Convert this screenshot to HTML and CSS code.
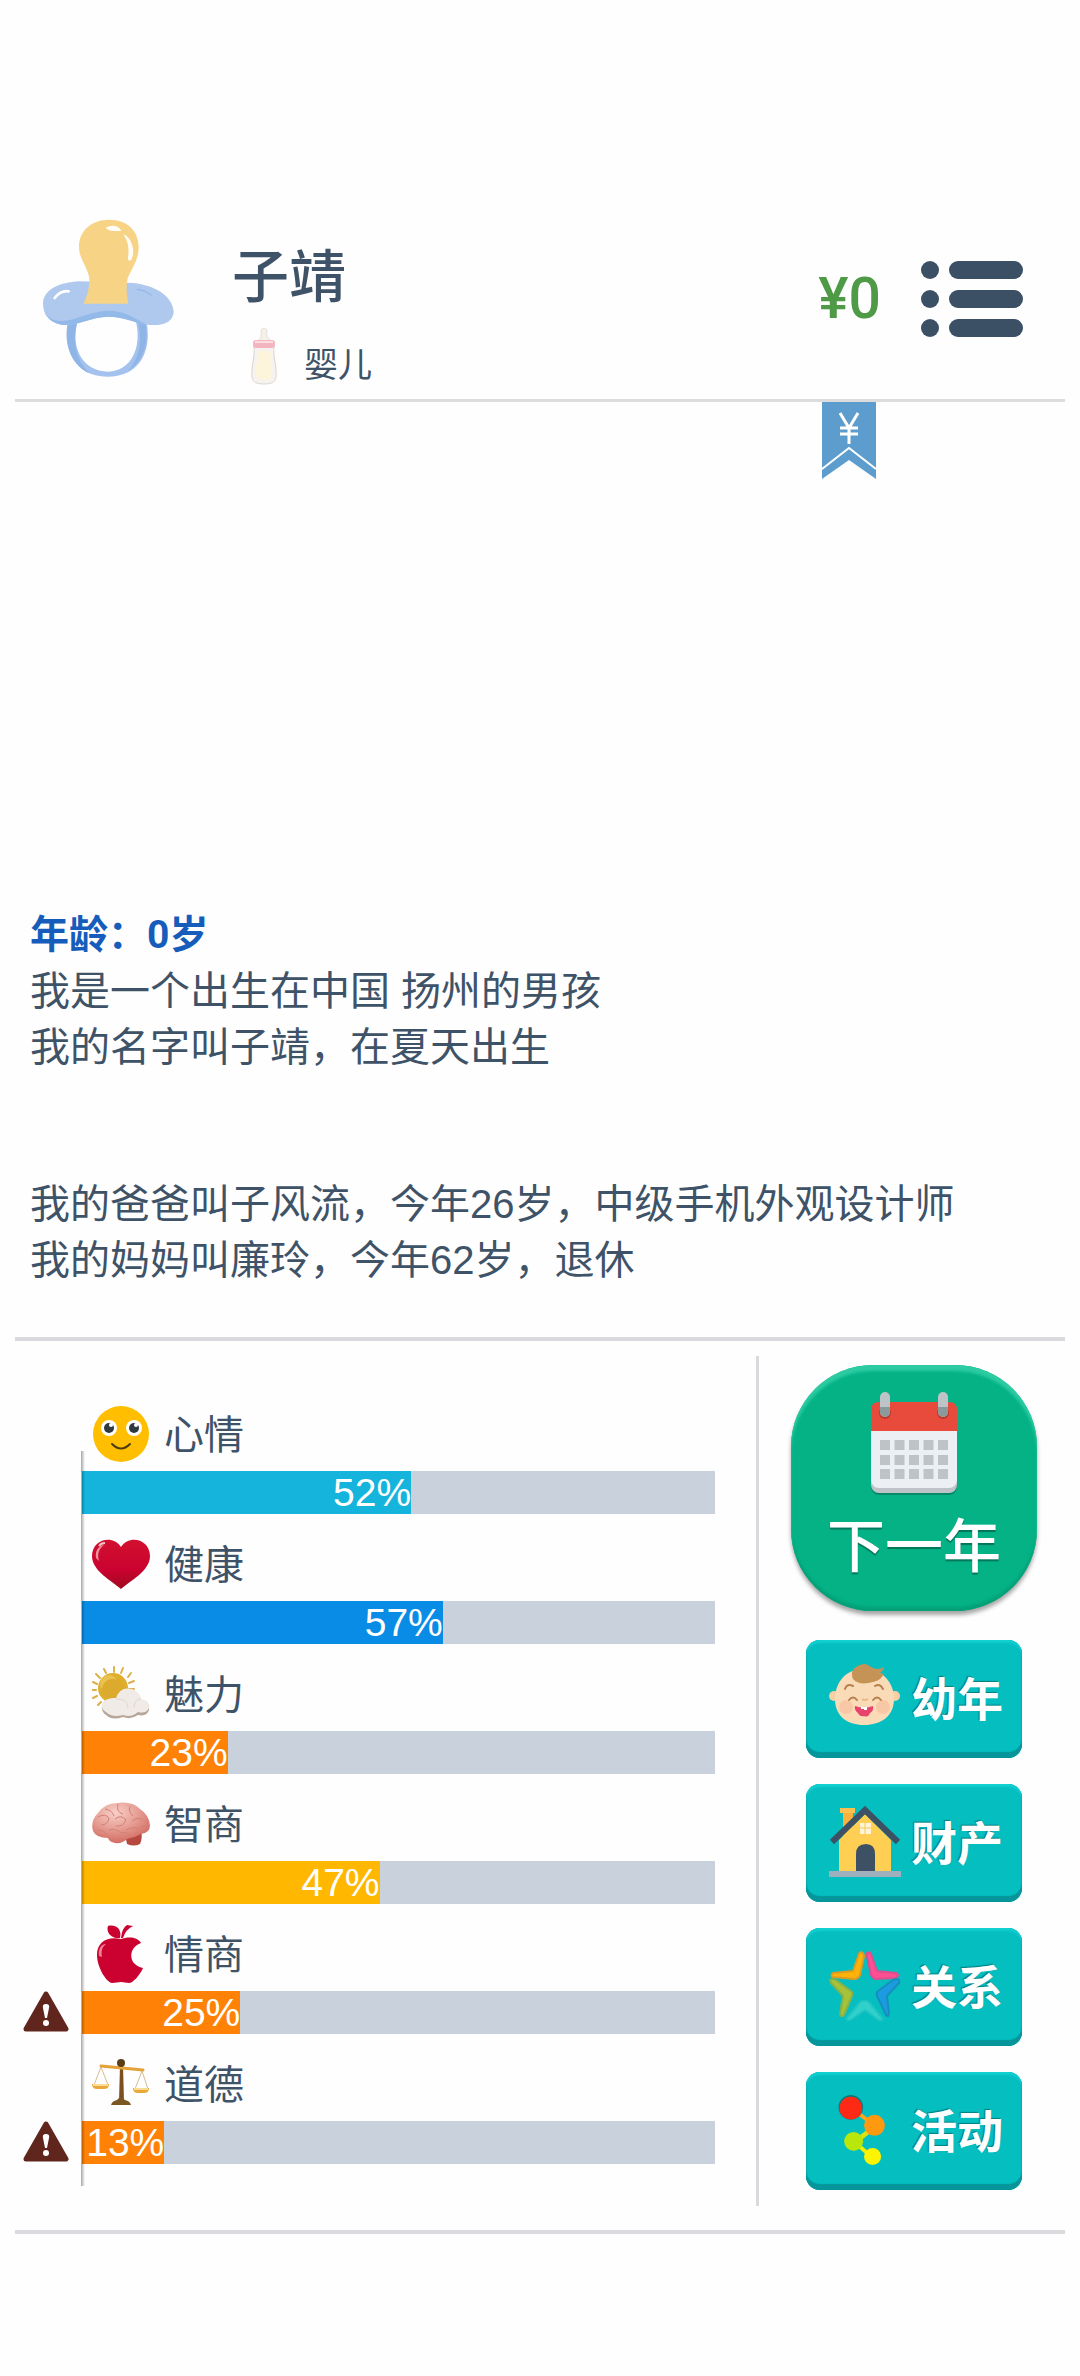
FILE: index.html
```
<!DOCTYPE html>
<html lang="zh-CN">
<head>
  <meta charset="UTF-8" />
  <meta name="viewport" content="width=device-width, initial-scale=1.0"/>
  <title>人生模拟</title>
  <link rel="stylesheet" href="styles.css">
</head>
<body>
  <header class="header">
    <svg class="avatar" viewBox="129 54 396 480" aria-hidden="true">
      <path d="M203 370 C188 440 220 530 322 530 C422 530 455 450 440 368 L408 366 C426 440 395 513 325 515 C245 514 212 440 232 366Z" fill="#a3c3ee"/>
      <path d="M204 372 C190 440 222 500 268 520 C228 480 216 430 231 370Z" fill="#8fb4e6"/>
      <path d="M437 370 C448 435 425 490 385 512 C415 480 428 430 415 370Z" fill="#8fb4e6"/>
      <path d="M129 310 C132 268 175 248 240 244 L400 249 C465 256 518 288 521 335 C520 365 490 380 440 374 C400 366 370 350 325 350 C270 352 235 376 190 375 C150 370 129 345 129 310Z" fill="#afc8ee"/>
      <path d="M131 325 C140 362 175 368 210 360 C260 345 290 332 330 332 C375 334 400 352 440 374 C400 368 370 350 325 350 C270 352 235 376 190 375 C155 371 135 350 131 325Z" fill="#93b9e9"/>
      <path d="M250 311 C264 285 272 250 266 225 C255 190 237 172 237 140 C237 92 275 59 328 59 C381 59 416 92 416 142 C416 180 395 205 383 235 C377 260 381 290 385 311Z" fill="#f7d386"/>
      <path d="M317 84 C332 74 355 74 364 93 C348 92 330 97 317 84Z M370 103 C394 112 408 150 394 180 C388 184 383 181 384 174 C388 145 385 125 370 103Z" fill="#fffdf6"/>
      <path d="M164 294 C175 280 192 272 206 274" fill="none" stroke="#fff" stroke-width="8" stroke-linecap="round"/>
      <path d="M412 268 Q435 270 453 285" fill="none" stroke="#93b9e9" stroke-width="4" stroke-linecap="round"/>
    </svg>
    <div class="identity">
      <h1 class="name">子靖</h1>
      <p class="stage">
        <svg class="bottle" viewBox="0 0 28 58" aria-hidden="true">
          <path d="M10 12 C12 9 11 5 11 3 Q14 -1 17 3 C17 6 16 9 18 11 L24 16 H4Z" fill="#f5f0e8" stroke="#e6dfd8" stroke-width="1"/>
          <path d="M4 19 H24 C23 31 26 36 26 44 C27 54 24 57 14 57 C4 57 1 54 2 44 C2 36 5 31 4 19Z" fill="#f6f2ef" stroke="#ddd5d2" stroke-width="1"/>
          <path d="M7 25 Q14 22 21 25 C20 34 22 38 22 44 C22 51 21 53 14 53 C7 53 6 50 6 44 C6 38 8 34 7 25Z" fill="#fdf4dc"/>
          <rect x="3" y="13" width="22" height="8" rx="3" fill="#f3b5bf"/>
          <path d="M5 15 H23" stroke="#fbdde1" stroke-width="2"/>
        </svg>
        <span>婴儿</span>
      </p>
    </div>
    <div class="account">
      <span class="money">¥0</span>
      <button class="menu" type="button" aria-label="菜单">
        <svg viewBox="0 0 102 76" aria-hidden="true">
          <g fill="#3b4f65">
            <circle cx="9" cy="9" r="9"/>
            <circle cx="9" cy="38" r="9"/>
            <circle cx="9" cy="67" r="9"/>
            <rect x="28" y="0" width="74" height="18" rx="9"/>
            <rect x="28" y="29" width="74" height="18" rx="9"/>
            <rect x="28" y="58" width="74" height="18" rx="9"/>
          </g>
        </svg>
      </button>
    </div>
  </header>

  <main class="log">
    <button class="ribbon" type="button" aria-label="财务">
      <svg viewBox="0 0 54 77" aria-hidden="true">
        <path d="M0 0 H54 V77 L27 58 L0 77Z" fill="#5c9dcd"/>
        <path d="M0 67 L27 46 L54 67" fill="none" stroke="#fff" stroke-width="2"/>
        <path d="M18 11 L27 26 L36 11 M27 26 V42 M18 26 H36 M18 32 H36" fill="none" stroke="#fff" stroke-width="3"/>
      </svg>
    </button>
    <div class="story">
      <h2 class="age">年龄：0岁</h2>
      <p>我是一个出生在中国 扬州的男孩<br>我的名字叫子靖，在夏天出生</p>
      <p>我的爸爸叫子风流，今年26岁，中级手机外观设计师<br>我的妈妈叫廉玲，今年62岁，退休</p>
    </div>
  </main>

  <section class="panel">
    <div class="stats">
      <div class="stat">
        <div class="stat-head">
          <svg class="stat-icon" viewBox="0 0 58 58" aria-hidden="true">
            <circle cx="29" cy="29" r="28" fill="#ffbf00"/>
            <circle cx="17" cy="23" r="8" fill="#fff"/>
            <circle cx="42" cy="23" r="8" fill="#fff"/>
            <circle cx="17" cy="23" r="5" fill="#2f3a40"/>
            <circle cx="42" cy="23" r="5" fill="#2f3a40"/>
            <circle cx="19" cy="20" r="2" fill="#fff"/>
            <circle cx="44" cy="20" r="2" fill="#fff"/>
            <path d="M20 39 Q29 48 38 39" fill="none" stroke="#4c3b13" stroke-width="2" stroke-linecap="round"/>
          </svg>
          <span>心情</span>
        </div>
        <div class="bar"><div class="fill cyan" style="width: 52%">52%</div></div>
      </div>

      <div class="stat">
        <div class="stat-head">
          <svg class="stat-icon" viewBox="0 0 58 58" aria-hidden="true">
            <defs>
              <linearGradient id="heart" x1="0" y1="0" x2="0" y2="1">
                <stop offset="0" stop-color="#d1112f"/>
                <stop offset="0.6" stop-color="#cb0230"/>
                <stop offset="1" stop-color="#a00a22"/>
              </linearGradient>
            </defs>
            <path d="M29 54 C20 46 0 36 0 21 C0 4 21 -1 29 12 C37 -1 58 4 58 21 C58 36 38 46 29 54Z" fill="url(#heart)"/>
            <path d="M4 23 C3 16 6 11 12 10 C7 14 5 18 7 26Z" fill="#f0929e"/>
            <path d="M7 11 Q9 8 13 8" fill="none" stroke="#f6c3c8" stroke-width="2"/>
          </svg>
          <span>健康</span>
        </div>
        <div class="bar"><div class="fill blue" style="width: 57%">57%</div></div>
      </div>

      <div class="stat">
        <div class="stat-head">
          <svg class="stat-icon" viewBox="0 0 58 58" aria-hidden="true">
            <g stroke="#dcb14b" stroke-width="2" stroke-linecap="round">
              <path d="M22 7 V2 M29 8 L31 3 M36 12 L39 8 M14 8 L12 4 M8 13 L4 9 M5 19 L1 17 M4 25 H0 M5 31 L1 33 M9 37 L6 40 M37 18 L42 16 M37 24 H42"/>
            </g>
            <circle cx="21" cy="23" r="15" fill="#dfae2d"/>
            <circle cx="17" cy="19" r="9" fill="#e9c14e"/>
            <circle cx="21" cy="25" r="11" fill="#dcaa2c"/>
            <path d="M14 50 Q9 47 10 40 Q14 32 24 34 Q28 22 40 25 Q48 28 49 35 Q58 35 57 45 Q55 52 46 50 Q39 55 31 52 Q20 56 14 50Z" fill="#b7a69a"/>
            <path d="M14 47 Q9 44 10 39 Q14 32 24 33 Q28 21 40 24 Q48 27 49 34 Q58 35 57 43 Q54 49 46 47 Q39 53 31 50 Q20 53 14 47Z" fill="#f0ebe6"/>
            <path d="M24 34 Q35 33 36 43 M42 43 Q42 34 49 34" fill="none" stroke="#dfd7d0" stroke-width="1"/>
          </svg>
          <span>魅力</span>
        </div>
        <div class="bar"><div class="fill orange" style="width: 23%">23%</div></div>
      </div>

      <div class="stat">
        <div class="stat-head">
          <svg class="stat-icon" viewBox="0 0 58 58" aria-hidden="true">
            <defs>
              <radialGradient id="brain" cx="0.4" cy="0.25" r="0.8">
                <stop offset="0" stop-color="#f8cfc8"/>
                <stop offset="0.5" stop-color="#e69d93"/>
                <stop offset="1" stop-color="#d0655c"/>
              </radialGradient>
            </defs>
            <path d="M34 44 L49 36 Q51 42 48 49 Q42 52 35 49Z" fill="#b5483f"/>
            <path d="M1 36 Q-2 26 6 18 Q13 8 25 8 Q40 6 48 14 Q57 20 58 30 Q58 38 49 39 Q42 43 35 44 Q30 49 23 48 Q17 47 16 43 Q4 43 1 36Z" fill="url(#brain)"/>
            <path d="M6 22 Q13 18 17 23 Q16 30 9 30 M13 14 Q20 15 22 21 M26 9 Q24 17 31 19 M23 24 Q29 19 34 25 Q31 32 24 31 M38 11 Q36 17 41 21 M40 26 Q46 21 51 25 M17 35 Q24 33 29 38 M6 36 Q11 33 16 42 M34 35 Q41 31 47 34 M29 38 Q35 36 38 42 M49 32 Q54 29 56 32" fill="none" stroke="#d28177" stroke-width="1"/>
          </svg>
          <span>智商</span>
        </div>
        <div class="bar"><div class="fill yellow" style="width: 47%">47%</div></div>
      </div>

      <div class="stat">
        <div class="stat-head">
          <svg class="stat-icon" viewBox="0 0 58 58" aria-hidden="true">
            <path d="M28 13 C18 14 14 6 16 1 C25 -1 30 5 28 13Z M29 13 Q30 3 35 0 L41 1 Q34 4 31 13Z" fill="#cb0230"/>
            <path d="M29 14 C35 12 45 11 49 18 C40 21 37 30 41 37 Q45 42 51 43 C48 50 41 58 37 58 C34 58 32 57 29 57 C26 57 24 58 20 58 C14 57 5 42 5 30 C5 18 14 11 29 14Z" fill="#cb0230"/>
            <path d="M7 31 C6 24 9 19 14 19 C10 22 9 26 10 32Z" fill="#ee8295"/>
          </svg>
          <span>情商</span>
        </div>
        <svg class="warn" viewBox="0 0 46 42" role="img" aria-label="警告">
          <path d="M23 3 L43 38 H3Z" fill="#60261d" stroke="#60261d" stroke-width="5" stroke-linejoin="round"/>
          <path d="M23 13 Q27 13 26 17 L24 27 H22 L20 17 Q19 13 23 13Z" fill="#fff"/>
          <circle cx="23" cy="32" r="3" fill="#fff"/>
        </svg>
        <div class="bar"><div class="fill orange" style="width: 25%">25%</div></div>
      </div>

      <div class="stat">
        <div class="stat-head">
          <svg class="stat-icon" viewBox="0 0 58 58" aria-hidden="true">
            <path d="M9 12 L2 30 M9 12 L16 30 M50 16 L43 34 M50 16 L56 34" stroke="#d9bd94" stroke-width="1"/>
            <path d="M28 10 H31 L32 47 H27Z" fill="#7b4f1e"/>
            <path d="M9 11 L51 15" stroke="#e3a23a" stroke-width="3" stroke-linecap="round"/>
            <circle cx="29" cy="8" r="4" fill="#5b3d1a"/>
            <path d="M19 50 Q20 46 25 45 Q28 40 33 45 Q38 46 39 50Z" fill="#7a5822"/>
            <path d="M0 29 H17 Q17 34 12 34 H5 Q0 34 0 29Z M41 33 H57 Q57 38 52 38 H46 Q41 38 41 33Z" fill="#e9a83a"/>
            <path d="M1 30 H16 M42 34 H56" stroke="#fbdc92" stroke-width="2"/>
          </svg>
          <span>道德</span>
        </div>
        <svg class="warn" viewBox="0 0 46 42" role="img" aria-label="警告">
          <path d="M23 3 L43 38 H3Z" fill="#60261d" stroke="#60261d" stroke-width="5" stroke-linejoin="round"/>
          <path d="M23 13 Q27 13 26 17 L24 27 H22 L20 17 Q19 13 23 13Z" fill="#fff"/>
          <circle cx="23" cy="32" r="3" fill="#fff"/>
        </svg>
        <div class="bar"><div class="fill orange" style="width: 13%">13%</div></div>
      </div>
    </div>

    <nav class="actions">
      <button class="next" type="button">
        <svg class="calendar" viewBox="0 0 88 104" aria-hidden="true">
          <rect x="1" y="14" width="86" height="89" rx="8" fill="#058a68"/>
          <rect x="1" y="20" width="86" height="81" rx="8" fill="#bdc3c7"/>
          <rect x="1" y="20" width="86" height="76" rx="8" fill="#ecf0f5"/>
          <path d="M1 39 V18 Q1 10 9 10 H79 Q87 10 87 18 V39Z" fill="#e84b3c"/>
          <circle cx="15" cy="21" r="6" fill="#bf392b"/>
          <circle cx="73" cy="21" r="6" fill="#bf392b"/>
          <rect x="10" y="0" width="10" height="25" rx="5" fill="#bdc3c7"/>
          <rect x="68" y="0" width="10" height="25" rx="5" fill="#bdc3c7"/>
          <path d="M10 15 H20 V20 A5 5 0 0 1 10 20Z M68 15 H78 V20 A5 5 0 0 1 68 20Z" fill="#8a9a9b"/>
          <path d="M10 53 H78 M10 68 H78 M10 82 H78" stroke="#bdc3c7" stroke-width="10" stroke-dasharray="10 4.5"/>
        </svg>
        <span>下一年</span>
      </button>

      <button class="action" type="button">
        <svg class="action-icon" viewBox="0 0 72 72" aria-hidden="true">
          <circle cx="5" cy="34" r="5" fill="#f6cfa4"/>
          <circle cx="66" cy="34" r="5" fill="#f6cfa4"/>
          <path d="M35 7 C54 7 65 21 65 37 C65 54 52 63 35 63 C18 63 6 54 6 37 C6 21 16 7 35 7Z" fill="#fadbb7"/>
          <circle cx="17" cy="45" r="7" fill="#f8c8a6"/>
          <circle cx="54" cy="45" r="7" fill="#f8c8a6"/>
          <path d="M24 17 Q20 7 31 3 Q37 0 42 5 Q49 9 55 5 Q54 10 50 11 Q54 12 55 11 Q53 18 44 20 Q30 24 24 17Z" fill="#c49355"/>
          <path d="M16 27 Q18 21 24 24 M46 24 Q51 21 54 27 M20 38 Q24 33 28 38 M44 38 Q48 33 52 38" fill="none" stroke="#b5814e" stroke-width="2" stroke-linecap="round"/>
          <path d="M33 37 Q36 39 39 37" fill="none" stroke="#ebb78c" stroke-width="2"/>
          <path d="M26 44 Q35 47 44 44 Q45 49 41 51 Q39 56 35 54 Q31 55 29 51 Q25 48 26 44Z" fill="#e8436d"/>
          <path d="M32 45 H38 V48 H35 V47 H32Z" fill="#fff"/>
        </svg>
        <span>幼年</span>
      </button>

      <button class="action" type="button">
        <svg class="action-icon" viewBox="0 0 72 72" aria-hidden="true">
          <path d="M14 6 H24 V26 L14 34Z" fill="#f9b13d"/>
          <rect x="11" y="2" width="15" height="5" fill="#fbc04f"/>
          <path d="M10 34 L36 8 L62 34 V65 H10Z" fill="#fecf53"/>
          <path d="M3 36 L36 4 L69 36" fill="none" stroke="#3e5064" stroke-width="6"/>
          <rect x="31" y="17" width="11" height="11" fill="#fff5d6"/>
          <path d="M36 17 V28 M31 22 H42" stroke="#f3c75a" stroke-width="1"/>
          <path d="M27 65 V48 Q27 38 37 38 Q46 38 46 48 V65Z" fill="#3e5064"/>
          <rect x="0" y="65" width="72" height="6" fill="#9eb0bd"/>
        </svg>
        <span>财产</span>
      </button>

      <button class="action" type="button">
        <svg class="action-icon" viewBox="0 0 72 72" aria-hidden="true">
          <g stroke-width="2" stroke-linejoin="round">
            <path d="M34 3 Q31 1 30 4 L24 21 L4 23 Q1 26 4 27 L25 29 Q29 29 31 25 L35 6Z" fill="#ffb20a" stroke="#dd9c20"/>
            <path d="M38 3 Q41 1 42 4 L48 21 L67 23 Q71 25 67 28 L46 29 Q43 28 42 25 L38 6Z" fill="#ff4e93" stroke="#d8508c"/>
            <path d="M1 30 Q4 28 7 30 L22 41 Q24 43 23 46 L15 65 Q12 68 11 64 L14 46 L2 33Z" fill="#a6c238" stroke="#84b24c"/>
            <path d="M70 30 Q68 28 64 30 L49 41 Q47 43 48 46 L57 65 Q60 68 60 63 L58 46 L70 33Z" fill="#1b9be0" stroke="#178fbc"/>
            <path d="M17 69 L30 53 Q35 48 41 53 L54 69 Q52 72 48 69 L36 60 L23 69 Q19 72 17 69Z" fill="#30d0cb" stroke="#1ec4c3"/>
          </g>
        </svg>
        <span>关系</span>
      </button>

      <button class="action" type="button">
        <svg class="action-icon" viewBox="0 0 72 76" aria-hidden="true">
          <path d="M22 15 L47 34" stroke="#ffa51c" stroke-width="4"/>
          <path d="M47 34 L25 51" stroke="#dfe010" stroke-width="5"/>
          <path d="M25 51 L44 67" stroke="#f0f000" stroke-width="4"/>
          <circle cx="21" cy="14" r="13" fill="#0b7a7c"/>
          <circle cx="21" cy="15" r="12" fill="#ff2a16"/>
          <circle cx="46" cy="33" r="11" fill="#ff9a10"/>
          <circle cx="24" cy="50" r="10" fill="#b9e70b"/>
          <circle cx="44" cy="66" r="9" fill="#fcf400"/>
        </svg>
        <span>活动</span>
      </button>
    </nav>
  </section>
</body>
</html>
```
FILE: styles.css
```
* {
  box-sizing: border-box;
}
body {
  display: flex;
  flex-direction: column;
  min-height: 100vh;
  margin: 0;
  padding: 200px 15px 142px;
  background: #fefefe;
  color: #3f5368;
  font-family: "Liberation Sans", "Noto Sans CJK SC", sans-serif;
  font-size: 40px;
}
h1, h2, p {
  margin: 0;
}
button {
  margin: 0;
  padding: 0;
  border: none;
  background: none;
  font-family: inherit;
  cursor: pointer;
}
svg {
  display: block;
  flex: none;
}

/* 顶部 */
.header {
  display: flex;
  align-items: flex-start;
  padding: 18px 42px 14px 28px;
  border-bottom: 3px solid #dcdcdc;
}
.avatar {
  width: 132px;
  height: 160px;
}
.identity {
  flex: 1;
  padding: 12px 0 0 57px;
}
.name {
  font-size: 57px;
  font-weight: 500;
  line-height: 84px;
  font-family: "Noto Sans CJK SC", sans-serif;
}
.stage {
  display: flex;
  align-items: flex-end;
  gap: 26px;
  margin-top: 13px;
  padding-left: 18px;
  font-size: 34px;
  line-height: 40px;
}
.bottle {
  width: 28px;
  height: 58px;
}
.account {
  display: flex;
  align-items: center;
  align-self: center;
  gap: 40px;
  padding-bottom: 6px;
}
.money {
  color: #4f9a46;
  font-family: Roboto, "Noto Sans CJK SC", sans-serif;
  font-size: 57px;
  font-weight: 500;
  line-height: 84px;
}
.menu svg {
  width: 102px;
  height: 76px;
}

/* 人生记录 */
.log {
  display: flex;
  flex: 1;
  flex-direction: column;
  justify-content: space-between;
  padding-bottom: 49px;
}
.ribbon {
  align-self: flex-end;
  margin-right: 189px;
}
.ribbon svg {
  width: 54px;
  height: 77px;
}
.story {
  padding: 0 15px;
  line-height: 56px;
}
.story p + p {
  margin-top: 101px;
}
.age {
  color: #165dbb;
  font-family: Roboto, "Noto Sans CJK SC", sans-serif;
  font-size: 39px;
  font-weight: 700;
}

/* 下方面板 */
.panel {
  display: flex;
  border-top: 4px solid #dadade;
  border-bottom: 4px solid #dadade;
}
.stats {
  position: relative;
  flex: 1;
  padding: 43px 41px 0 0;
}
/* 属性条左侧的竖轴 */
.stats::before {
  content: "";
  position: absolute;
  z-index: 1;
  top: 110px;
  bottom: 44px;
  left: 66px;
  width: 4px;
  background: linear-gradient(to right, rgba(0, 0, 0, 0.35), rgba(0, 0, 0, 0));
}
.stat {
  display: grid;
  grid-template-columns: 67px 1fr;
}
.stat-head {
  display: flex;
  grid-column: 2;
  align-items: center;
  gap: 14px;
  height: 87px;
  padding: 13px 0 0 10px;
}
.stat-head span {
  padding-bottom: 5px;
}
.stat-icon {
  width: 58px;
  height: 58px;
}
.warn {
  width: 46px;
  height: 42px;
  margin-left: 8px;
}
.bar {
  grid-column: 2;
  background: #c9d2dc;
}
.fill {
  color: #fff;
  font-size: 39px;
  line-height: 43px;
  text-align: right;
}
.cyan {
  background: #14b4dc;
}
.blue {
  background: #098ce5;
}
.orange {
  background: #ff8105;
}
.yellow {
  background: #ffb700;
}

.actions {
  display: flex;
  flex-direction: column;
  align-items: center;
  gap: 26px;
  width: 309px;
  margin: 15px 0 24px;
  padding: 9px 0 16px 4px;
  border-left: 3px solid #dadade;
}
.next {
  display: flex;
  flex-direction: column;
  align-items: center;
  justify-content: center;
  gap: 4px;
  width: 246px;
  height: 246px;
  margin-bottom: 3px;
  border-radius: 82px;
  background: #04b286;
  box-shadow: inset 0 6px 3px #2dcba2, inset 0 -4px 3px #04a077, 0 4px 4px rgba(0, 0, 0, 0.35);
  color: #fff;
  font-family: "Noto Sans CJK SC", sans-serif;
  font-size: 58px;
  font-weight: 500;
  line-height: 84px;
  text-shadow: 0 2px 1px rgba(0, 0, 0, 0.35);
}
.calendar {
  width: 88px;
  height: 104px;
}
.action {
  display: flex;
  align-items: center;
  justify-content: center;
  gap: 10px;
  width: 216px;
  height: 118px;
  padding: 0 0 2px 4px;
  border-radius: 14px;
  background: #05bec0;
  box-shadow: inset 0 -6px 1px #05959a, inset 0 3px 2px #12cfd1, inset 0 0 1px 1px #0aa5a8;
  color: #fff;
  font-family: "Noto Sans CJK SC", sans-serif;
  font-size: 46px;
  font-weight: 700;
  line-height: 68px;
  text-shadow: -1px -1px 1px rgba(0, 60, 60, 0.5);
}
.action span {
  padding-bottom: 5px;
}
.action-icon {
  width: 72px;
  height: 72px;
}
```
